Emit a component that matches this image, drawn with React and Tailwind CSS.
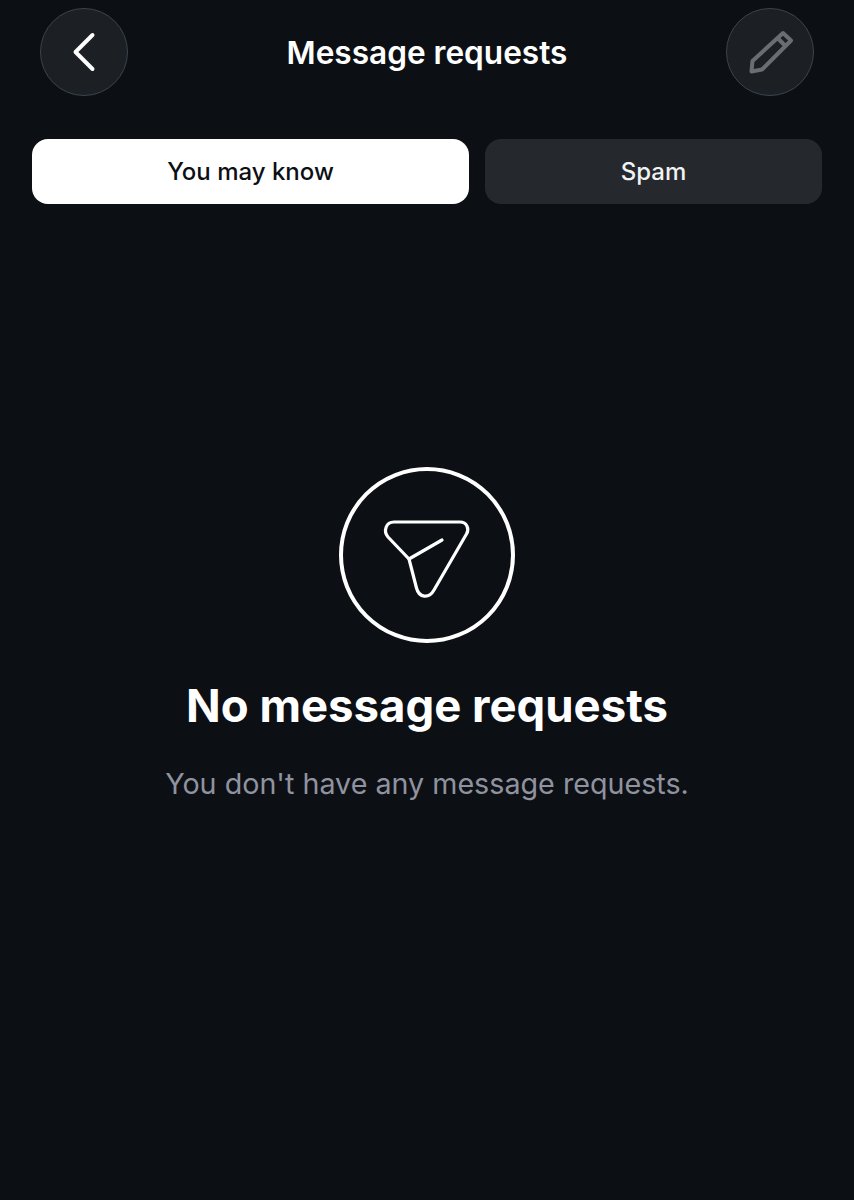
import { ChevronLeft } from 'lucide-react';

function PencilIcon() {
  return (
    <svg width="48" height="48" viewBox="0 0 48 48" fill="none" stroke="#6b6d70" strokeWidth="4" strokeLinejoin="round">
      <path d="M37 5 L45 12.5 L16 41.5 L5.5 43.5 L6.5 33 Z" />
      <path d="M32 10.5 L39.5 18" />
    </svg>
  );
}

function EmptyIcon() {
  return (
    <div className="w-[176px] h-[176px] rounded-full border-4 border-white flex items-center justify-center">
      <svg width="90" height="90" viewBox="55 55 90 90" fill="none" stroke="#fff" strokeWidth="3.2" strokeLinecap="round" strokeLinejoin="round">
        <path d="M67 67 H133 C140 67 142.5 74 139.5 79 L107 135 C102 144 92 143 89.5 133 L82 104 L61 82 C56 76 59 67 67 67 Z" />
        <path d="M82 104 L115 85" />
      </svg>
    </div>
  );
}

export default function App() {
  return (
    <div className="w-[854px] h-[1200px] bg-[#0c1015] font-['Inter',sans-serif]">
      <header className="flex items-center justify-between pl-10 pr-10 pt-2">
        <button className="w-[88px] h-[88px] rounded-full bg-[#1c2025] border border-[#3a444f] flex items-center justify-center">
          <ChevronLeft size={68} color="#fff" strokeWidth={1.4} />
        </button>
        <h1 className="mt-px text-[31.6px] leading-9 font-semibold text-white">Message requests</h1>
        <button className="w-[88px] h-[88px] rounded-full bg-[#1c2025] border border-[#3a444f] flex items-center justify-center">
          <PencilIcon />
        </button>
      </header>

      <div className="flex gap-4 ml-8 mt-[43px] w-[790px]">
        <button className="w-[437px] h-[65px] rounded-2xl bg-white text-[#0c1015] text-[24px] font-medium">You may know</button>
        <button className="w-[337px] h-[65px] rounded-2xl bg-[#25292e] text-[#f1f2f3] text-[24px] font-medium">Spam</button>
      </div>

      <div className="flex flex-col items-center mt-[263px]">
        <EmptyIcon />
        <h2 className="mt-[33px] text-[45.5px] leading-[60px] font-bold text-white">No message requests</h2>
        <p className="mt-[30px] text-[28.7px] leading-9 text-[#90939f]">You don't have any message requests.</p>
      </div>
    </div>
  );
}
